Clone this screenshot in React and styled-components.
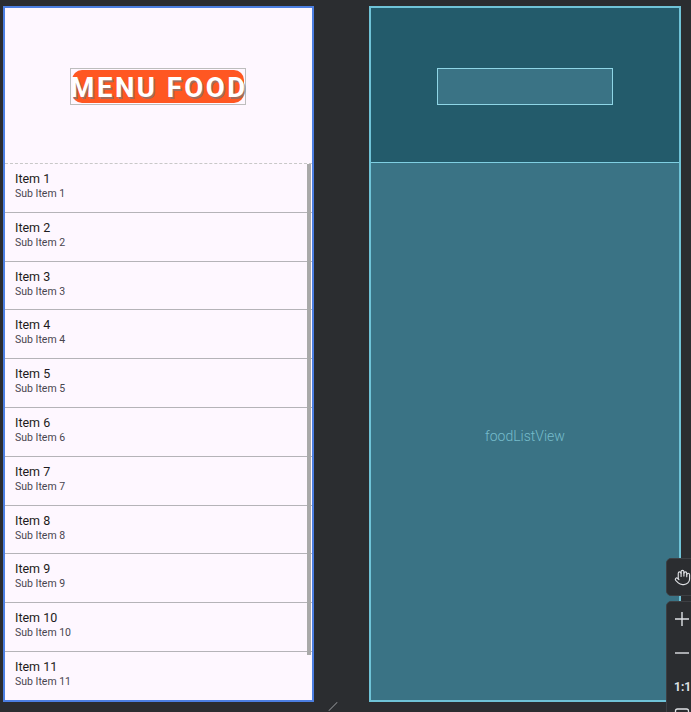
import React from 'react'
import styled, { createGlobalStyle } from 'styled-components'
import { Hand } from 'lucide-react'

const GlobalStyle = createGlobalStyle`
  html, body {
    margin: 0;
    padding: 0;
    background: #2b2d30;
    font-family: Roboto, "Noto Sans", "Liberation Sans", sans-serif;
    overflow: hidden;
  }
`

const Canvas = styled.div`
  position: relative;
  width: 691px;
  height: 712px;
  display: flex;
  align-items: flex-start;
  gap: 55px;
  padding: 6px 0 0 3px;
  box-sizing: border-box;
`

const Phone = styled.div`
  width: 311px;
  height: 696px;
  box-sizing: border-box;
  border: 2px solid #4c7fe2;
  background: #fef7ff;
  display: flex;
  flex-direction: column;
  overflow: hidden;
`

const Header = styled.div`
  height: 155px;
  flex-shrink: 0;
  display: flex;
  align-items: center;
  justify-content: center;
  padding: 2px 2px 0 0;
  box-sizing: border-box;
`

const MenuButton = styled.div`
  width: 176px;
  height: 37px;
  box-sizing: border-box;
  border: 1px solid #bdbdbd;
  display: flex;
  align-items: center;
  justify-content: center;
  position: relative;
`

const MenuFill = styled.div`
  position: absolute;
  inset: 1px;
  background: #ff5722;
  border-radius: 10px;
`

const MenuText = styled.span`
  position: relative;
  top: 1px;
  color: #ffffff;
  font-weight: 700;
  font-size: 27.5px;
  line-height: 1;
  letter-spacing: 2.5px;
  text-shadow: 1.5px 1.5px 0 rgba(120, 120, 120, 0.7);
  white-space: nowrap;
  margin-left: 3px;
`

const List = styled.div`
  position: relative;
  flex: 1;
  border-top: 1px dashed #c8c8c8;
  overflow: hidden;
`

const Row = styled.div`
  height: 48.8px;
  box-sizing: border-box;
  border-bottom: 1px solid #b5b3b8;
  padding: 7px 0 0 10px;
  display: flex;
  flex-direction: column;
`

const Title = styled.span`
  font-size: 12.5px;
  color: #1d1b20;
  line-height: 15px;
`

const Sub = styled.span`
  font-size: 10.5px;
  color: #49454f;
  line-height: 15px;
`

const ScrollBar = styled.div`
  position: absolute;
  top: 0;
  right: 1px;
  width: 4px;
  height: 491px;
  background: #a9a9a9;
`

const Blueprint = styled.div`
  width: 312px;
  height: 696px;
  box-sizing: border-box;
  border: 2px solid #6fc3d7;
  display: flex;
  flex-direction: column;
`

const BpHeader = styled.div`
  height: 155px;
  flex-shrink: 0;
  background: #235b6b;
  border-bottom: 1px solid #7fcfe2;
  display: flex;
  align-items: center;
  justify-content: center;
  padding-top: 2px;
  box-sizing: border-box;
`

const BpBox = styled.div`
  width: 176px;
  height: 37px;
  box-sizing: border-box;
  background: #3a7385;
  border: 1px solid #8fd6e6;
`

const BpBody = styled.div`
  flex: 1;
  background: #3a7385;
  display: flex;
  align-items: center;
  justify-content: center;
  color: #76bccb;
  font-size: 14px;
  font-weight: 300;
  padding-top: 9px;
`

const Tools = styled.div`
  position: absolute;
  left: 666px;
  top: 558px;
  display: flex;
  flex-direction: column;
  gap: 5px;
`

const ToolPanel = styled.div`
  width: 34px;
  background: #2b2d30;
  border: 1px solid #3d3f43;
  border-radius: 5px;
  display: flex;
  flex-direction: column;
  align-items: flex-start;
  box-sizing: border-box;
  color: #dfe1e5;
`

const ToolItem = styled.div`
  height: ${p => p.$h || 34}px;
  width: 30px;
  display: flex;
  align-items: center;
  padding-left: 7px;
  box-sizing: border-box;
  font-size: 12px;
  font-weight: 700;
`

const Resize = styled.div`
  position: absolute;
  left: 327px;
  top: 706px;
  width: 12px;
  height: 1px;
  background: #8a8c90;
  transform: rotate(-45deg);
`

const items = Array.from({ length: 11 }, (_, i) => i + 1)

export default function App() {
  return (
    <>
      <GlobalStyle />
      <Canvas>
        <Phone>
          <Header>
            <MenuButton>
              <MenuFill />
              <MenuText>MENU FOOD</MenuText>
            </MenuButton>
          </Header>
          <List>
            {items.map(n => (
              <Row key={n}>
                <Title>Item {n}</Title>
                <Sub>Sub Item {n}</Sub>
              </Row>
            ))}
            <ScrollBar />
          </List>
        </Phone>
        <Blueprint>
          <BpHeader>
            <BpBox />
          </BpHeader>
          <BpBody>foodListView</BpBody>
        </Blueprint>
        <Resize />
        <Tools>
          <ToolPanel>
            <ToolItem $h={36}>
              <Hand size={17} strokeWidth={1.6} />
            </ToolItem>
          </ToolPanel>
          <ToolPanel>
            <ToolItem $h={34}>
              <svg width="16" height="16" viewBox="0 0 16 16">
                <path d="M8 1v14M1 8h14" stroke="#dfe1e5" strokeWidth="1.4" />
              </svg>
            </ToolItem>
            <ToolItem $h={34}>
              <svg width="16" height="16" viewBox="0 0 16 16">
                <path d="M1 8h14" stroke="#dfe1e5" strokeWidth="1.4" />
              </svg>
            </ToolItem>
            <ToolItem $h={34}>1:1</ToolItem>
            <ToolItem $h={20}>
              <svg width="16" height="16" viewBox="0 0 16 16">
                <rect x="1.5" y="3" width="13" height="10" rx="2" fill="none" stroke="#dfe1e5" strokeWidth="1.3" />
              </svg>
            </ToolItem>
          </ToolPanel>
        </Tools>
      </Canvas>
    </>
  )
}
